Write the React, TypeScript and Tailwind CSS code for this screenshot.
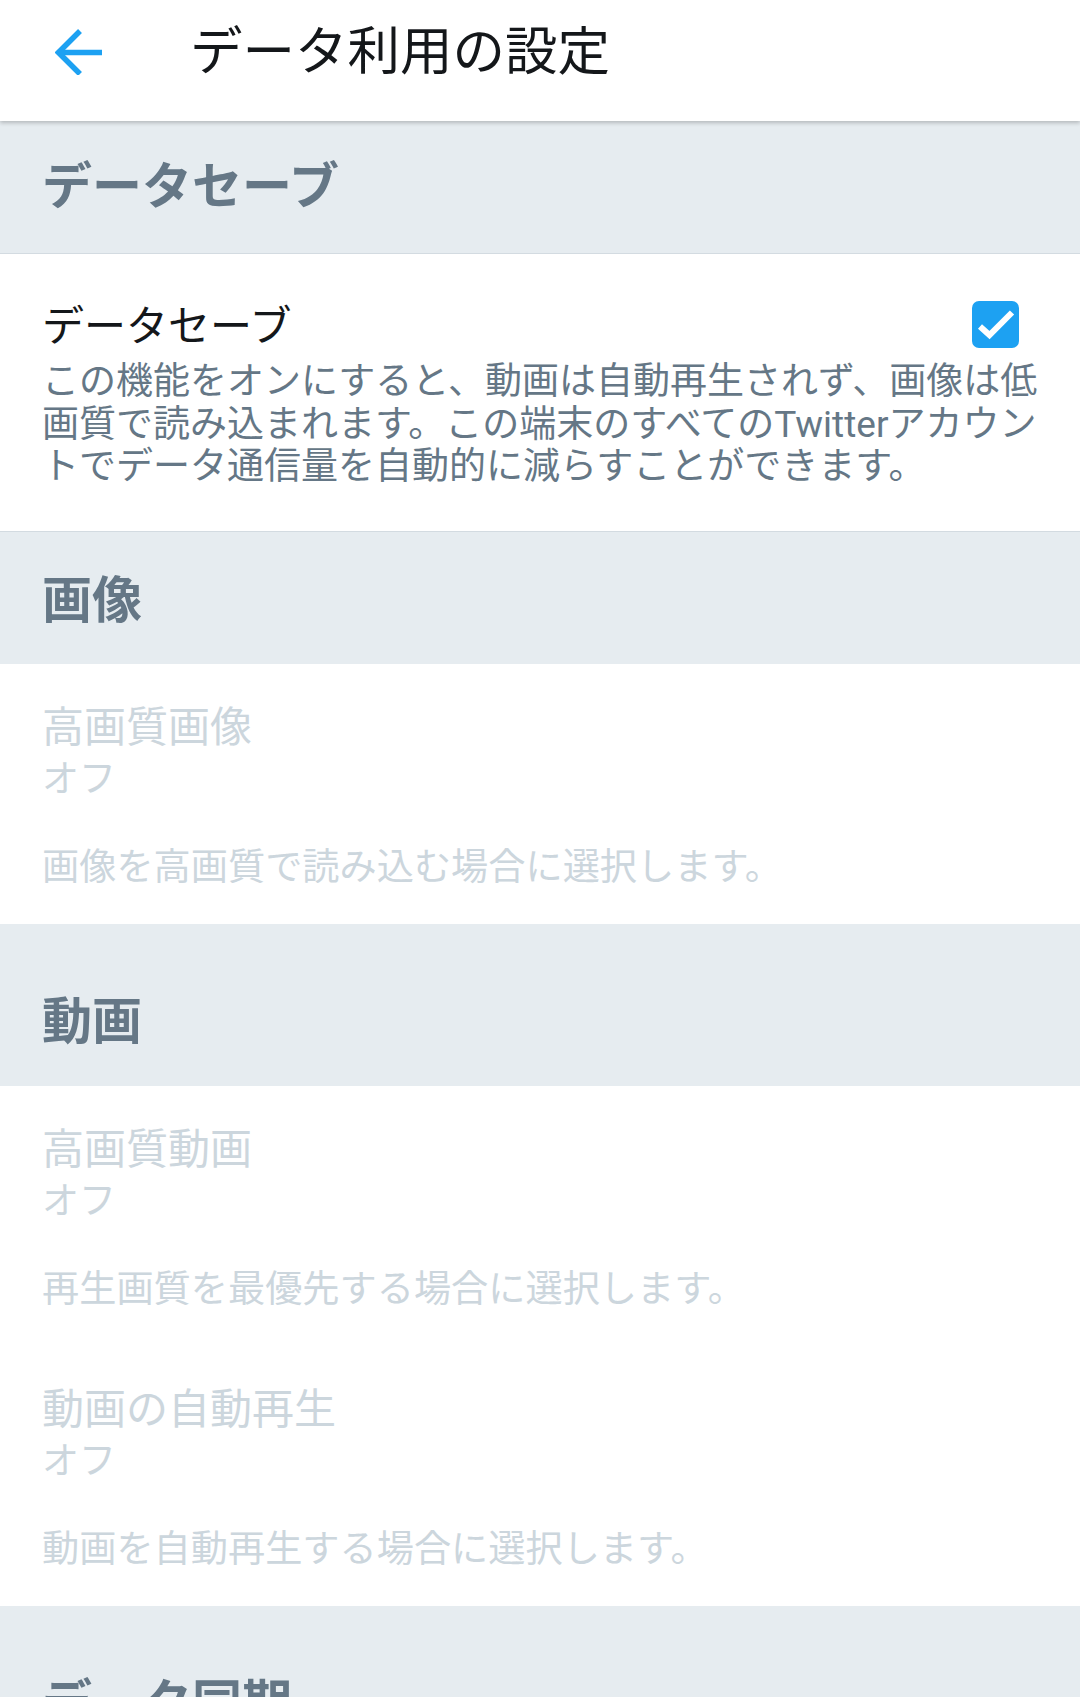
import React from "react";

const FONT = { fontFamily: 'Roboto, "Noto Sans CJK JP", sans-serif' };

function SectionHeader({ title, tall }: { title: string; tall?: boolean }) {
  return (
    <div
      className={
        "bg-[#e6ecf0] pl-[42px] " +
        (tall ? "pt-[74px] pb-[40px]" : "pt-[45px] pb-[39px]")
      }
    >
      <div className="text-[50px] leading-[48px] font-bold text-[#657786] whitespace-nowrap">
        {title}
      </div>
    </div>
  );
}

function DisabledItem({ title, desc }: { title: string; desc: string }) {
  return (
    <div className="bg-white pl-[42px] pr-[42px] pt-[36px] pb-[33px]">
      <div className="text-[42px] leading-[56px] text-[#ccd6dd] whitespace-nowrap">{title}</div>
      <div className="text-[37px] leading-[48px] text-[#ccd6dd] whitespace-nowrap">オフ</div>
      <div className="mt-[39px] text-[37.2px] leading-[48px] text-[#ccd6dd] whitespace-nowrap">
        {desc}
      </div>
    </div>
  );
}

export default function App() {
  return (
    <div className="w-[1080px] h-[1697px] overflow-hidden bg-white" style={FONT}>
      {/* App bar */}
      <div className="relative z-10 h-[121px] bg-white shadow-[0_2px_4px_rgba(0,0,0,0.22)]">
        <div className="flex h-[104px] items-center">
          <div className="pl-[55px] w-[190px] flex items-center">
            <svg width="48" height="46" viewBox="0 0 48 46" fill="none">
              <path d="M47 23.5H4" stroke="#1da1f2" strokeWidth="5.5" />
              <path d="M25 2L3.5 23.5L25 45" stroke="#1da1f2" strokeWidth="5.5" />
            </svg>
          </div>
          <div className="text-[52.5px] leading-[60px] text-[#14171a] whitespace-nowrap">
            データ利用の設定
          </div>
        </div>
      </div>

      {/* Data saver header */}
      <div className="bg-[#e6ecf0] pl-[42px] pt-[42px] pb-[42px] border-b border-[#d3dbe1]">
        <div className="text-[50px] leading-[48px] font-bold text-[#657786] whitespace-nowrap">
          データセーブ
        </div>
      </div>

      {/* Data saver item */}
      <div className="bg-white pl-[42px] pr-[42px] pt-[48px] pb-[42px] border-b border-[#d3dbe1]">
        <div className="flex items-start justify-between">
          <div className="text-[42px] leading-[50px] text-[#14171a] whitespace-nowrap">データセーブ</div>
          <div className="mt-[-1px] mr-[19px] w-[47px] h-[47px] rounded-[7px] bg-[#1da1f2] flex items-center justify-center">
            <svg width="47" height="47" viewBox="0 0 47 47" fill="none">
              <path d="M8 25.5L17.5 34L40 11.5" stroke="white" strokeWidth="6" />
            </svg>
          </div>
        </div>
        <div className="mt-[9px] text-[37px] leading-[42.5px] text-[#657786]">
          <div className="whitespace-nowrap">この機能をオンにすると、動画は自動再生されず、画像は低</div>
          <div className="whitespace-nowrap">画質で読み込まれます。この端末のすべてのTwitterアカウン</div>
          <div className="whitespace-nowrap">トでデータ通信量を自動的に減らすことができます。</div>
        </div>
      </div>

      <SectionHeader title="画像" />
      <DisabledItem title="高画質画像" desc="画像を高画質で読み込む場合に選択します。" />

      <SectionHeader title="動画" tall />
      <DisabledItem title="高画質動画" desc="再生画質を最優先する場合に選択します。" />
      <DisabledItem title="動画の自動再生" desc="動画を自動再生する場合に選択します。" />

      <SectionHeader title="データ同期" tall />
      <div className="h-[200px] bg-white" />
    </div>
  );
}
